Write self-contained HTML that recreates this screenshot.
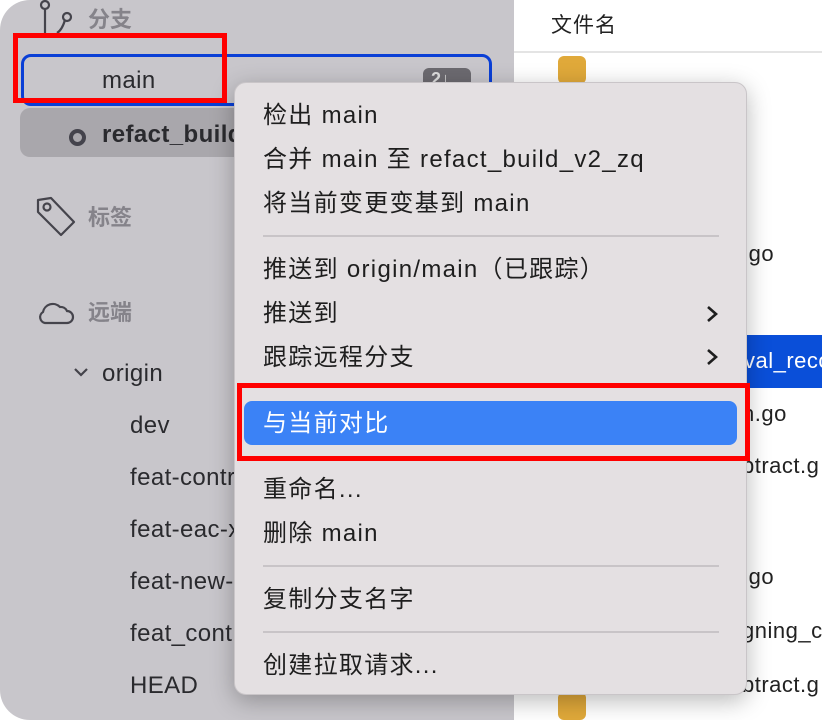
<!DOCTYPE html><html><head><meta charset="utf-8"><style>
*{margin:0;padding:0;box-sizing:border-box}
body{width:822px;height:720px;background:#fff;position:relative;overflow:hidden;font-family:"Liberation Sans","Noto Sans CJK SC",sans-serif}
.win{position:absolute;left:0;top:0;width:822px;height:720px;border-radius:30px;overflow:hidden;background:#fff}
.side{position:absolute;left:0;top:0;width:514px;height:720px;background:#c8c6cb}
.t{position:absolute;white-space:nowrap;line-height:1}
.s{font-size:24px;color:#2a2a2e;letter-spacing:0.4px}
.h{font-size:22px;color:#85838a;font-weight:bold}
.r{font-size:22px;color:#222;letter-spacing:0.5px}
.menu{position:absolute;left:234px;top:82px;width:513px;height:613px;background:#e4e0e2;border-radius:12px;box-shadow:0 6px 24px rgba(0,0,0,.28);border:1px solid #c9c5c8}
.mi{position:absolute;left:28px;font-size:24px;color:#1e1e1e;white-space:nowrap;line-height:1;letter-spacing:1.3px}
.sep{position:absolute;left:28px;width:456px;height:2px;background:#c8c4c7}
</style></head><body><div class="win">
<div class="side"></div>
<svg class="t" style="left:36px;top:0" width="40" height="40" viewBox="0 0 40 40" fill="none" stroke="#45444c" stroke-width="2.2"><circle cx="9" cy="5" r="4"/><line x1="9" y1="9" x2="9" y2="33"/><circle cx="31" cy="17" r="4"/><path d="M29 20 Q26 30 21 33"/></svg>
<div class="t h" style="left:88px;top:9px">分支</div>
<div class="t" style="left:21px;top:54px;width:471px;height:52px;border:3px solid #0a3fd6;border-radius:10px"></div>
<div class="t" style="left:423px;top:68px;width:48px;height:24px;background:#6c6a70;border-radius:6px;color:#ddd;font-size:18px;padding:2px 0 0 8px;font-weight:bold">2↓</div>
<div class="t s" style="left:102px;top:69px">main</div>
<div class="t" style="left:20px;top:108px;width:260px;height:49px;background:#a9a7ac;border-radius:10px"></div>
<div class="t" style="left:69px;top:129px;width:17px;height:17px;border:4px solid #44434c;border-radius:50%"></div>
<div class="t s" style="left:102px;top:123px;font-weight:bold">refact_build</div>
<svg class="t" style="left:35px;top:196px" width="42" height="42" viewBox="0 0 42 42" fill="none" stroke="#45444c" stroke-width="2.2"><path d="M3 4 L16 2 L39 26 L26 39 L3 16 Z" stroke-linejoin="round"/><circle cx="12" cy="11" r="3.5"/></svg>
<div class="t h" style="left:88px;top:207px">标签</div>
<svg class="t" style="left:37px;top:298px" width="38" height="28" viewBox="0 0 38 28" fill="none" stroke="#45444c" stroke-width="2.2"><path d="M8 25 H30 A6 6 0 0 0 30 13 A7 7 0 0 0 23 9 A10 10 0 0 0 6 14 A6 6 0 0 0 8 25 Z"/></svg>
<div class="t h" style="left:88px;top:302px">远端</div>
<svg class="t" style="left:73px;top:366px" width="16" height="12" viewBox="0 0 16 12" fill="none" stroke="#44434b" stroke-width="2.2"><path d="M2 3 L8 9 L14 3"/></svg>
<div class="t s" style="left:102px;top:362px">origin</div>
<div class="t s" style="left:130px;top:414px">dev</div>
<div class="t s" style="left:130px;top:466px">feat-contr</div>
<div class="t s" style="left:130px;top:518px">feat-eac-x</div>
<div class="t s" style="left:130px;top:570px">feat-new-x</div>
<div class="t s" style="left:130px;top:622px">feat_contr</div>
<div class="t s" style="left:130px;top:674px">HEAD</div>
<div class="t" style="left:551px;top:15px;font-size:21px;color:#222;letter-spacing:1px">文件名</div>
<div class="t" style="left:514px;top:51px;width:308px;height:2px;background:#e4e4e4"></div>
<div class="t" style="left:558px;top:56px;width:28px;height:28px;background:#e0a93a;border-radius:6px"></div>
<div class="t" style="left:558px;top:692px;width:28px;height:28px;background:#e0a93a;border-radius:6px"></div>
<div class="t" style="left:740px;top:335px;width:82px;height:53px;background:#0a4fd9"></div>
<div class="t r" style="left:742px;top:243px">.go</div>
<div class="t r" style="left:744px;top:350px;color:#fff">val_reco</div>
<div class="t r" style="left:742px;top:403px">n.go</div>
<div class="t r" style="left:742px;top:455px">btract.g</div>
<div class="t r" style="left:742px;top:566px">.go</div>
<div class="t r" style="left:742px;top:620px">gning_c</div>
<div class="t r" style="left:742px;top:674px">btract.g</div>
<div class="menu">
<div class="mi" style="top:21px">检出 main</div>
<div class="mi" style="top:65px">合并 main 至 refact_build_v2_zq</div>
<div class="mi" style="top:109px">将当前变更变基到 main</div>
<div class="sep" style="top:152px"></div>
<div class="mi" style="top:175px">推送到 origin/main（已跟踪）</div>
<div class="mi" style="top:219px">推送到</div>
<div class="mi" style="top:263px">跟踪远程分支</div>
<svg style="position:absolute;left:470px;top:222px" width="14" height="18" viewBox="0 0 14 18" fill="none" stroke="#1e1e1e" stroke-width="2.6"><path d="M3 2 L11 9 L3 16"/></svg>
<svg style="position:absolute;left:470px;top:265px" width="14" height="18" viewBox="0 0 14 18" fill="none" stroke="#1e1e1e" stroke-width="2.6"><path d="M3 2 L11 9 L3 16"/></svg>
<div style="position:absolute;left:9px;top:318px;width:493px;height:44px;background:#3b82f6;border-radius:8px"></div>
<div class="mi" style="top:329px;color:#fff">与当前对比</div>
<div class="mi" style="top:395px">重命名...</div>
<div class="mi" style="top:439px">删除 main</div>
<div class="sep" style="top:482px"></div>
<div class="mi" style="top:505px">复制分支名字</div>
<div class="sep" style="top:548px"></div>
<div class="mi" style="top:571px">创建拉取请求...</div>
</div>
<div class="t" style="left:13px;top:33px;width:214px;height:70px;border:5px solid #ff0000"></div>
<div class="t" style="left:237px;top:383px;width:513px;height:78px;border:5px solid #ff0000"></div>
</div></body></html>
